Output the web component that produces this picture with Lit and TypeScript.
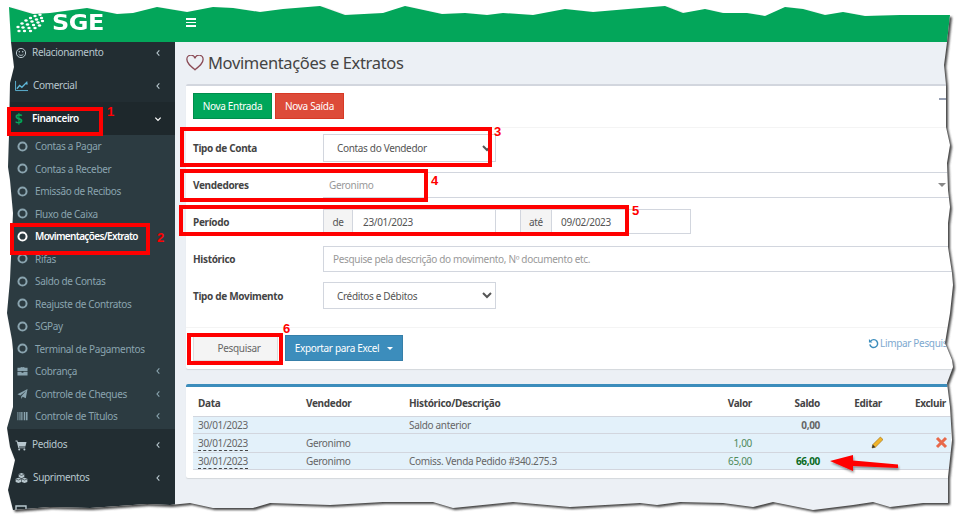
import { LitElement, html, css, svg } from "lit";
import { customElement } from "lit/decorators.js";

const edge: [number, number][] = [
  [9,7],[33,14],[50,13],[87,8],[117,14],[133,13],[157,7],[187,12],[213,7],[233,8],[260,12],[283,9],[320,6],[345,15],[383,13],[405,6],[442,14],[465,13],[487,15],[503,13],[533,15],[565,9],[593,12],[640,8],[665,6],[683,13],[705,9],[723,13],[747,13],[765,16],[785,7],[803,9],[825,15],[843,12],[865,16],[900,15],[950,15],
  [947,42],[944,65],[946,85],[946,127],[950,145],[947,163],[948,190],[950,207],[948,223],[948,247],[952,273],[953,285],[950,313],[945,343],[952,360],[953,367],[947,383],[950,407],[952,440],[948,477],[948,503],
  [923,503],[890,507],[873,502],[853,505],[813,510],[773,502],[753,507],[723,503],[680,502],[657,505],[640,503],[570,507],[513,502],[453,508],[433,502],[383,502],[330,505],[270,503],[253,508],[213,508],[190,503],[170,505],[147,504],[90,508],[50,507],[25,509],[13,510],
  [8,490],[15,460],[10,447],[7,428],[13,407],[13,350],[12,340],[7,313],[10,280],[13,213],[10,180],[8,167],[9,135],[10,83],[14,67],[11,42],
];
const inner = "M" + edge.map((p) => p.join(",")).join("L") + "Z";
const outer = "M0,0H963V520H0Z";

const chevL = html`<svg class="chev" viewBox="0 0 8 12"><path d="M6 2L2.5 6L6 10" fill="none" stroke="currentColor" stroke-width="1.7"/></svg>`;
const chevD = html`<svg class="chev" viewBox="0 0 12 8"><path d="M2 2L6 6L10 2" fill="none" stroke="currentColor" stroke-width="1.9"/></svg>`;
const ring = html`<svg class="ring" viewBox="0 0 10 10"><circle cx="5" cy="5" r="3.7" fill="none" stroke="currentColor" stroke-width="1.8"/></svg>`;

const icons = {
  smile: html`<svg class="ico" viewBox="0 0 12 12"><circle cx="6" cy="6" r="4.6" fill="none" stroke="currentColor" stroke-width="1"/><circle cx="4.3" cy="4.8" r=".8" fill="currentColor"/><circle cx="7.7" cy="4.8" r=".8" fill="currentColor"/><path d="M3.6 7.2C4.6 8.8 7.4 8.8 8.4 7.2" fill="none" stroke="currentColor" stroke-width=".9"/></svg>`,
  chart: html`<svg class="ico wide" viewBox="0 0 14 11"><path d="M.6 0V10.4H14" fill="none" stroke="#5fb7d8" stroke-width="1"/><path d="M2 8.4L5 5L7.4 6.8L12.6 1.6L13 4" fill="none" stroke="#5fb7d8" stroke-width="1.5"/></svg>`,
  cash: html`<span class="dollar">$</span>`,
  case: html`<svg class="ico sub" viewBox="0 0 12 11"><path d="M4 2V1H8V2H11.5V5.6H.5V2ZM5 2H7V1.8H5ZM.5 6.4H5V7.4H7V6.4H11.5V10.5H.5Z" fill="currentColor"/></svg>`,
  plane: html`<svg class="ico sub" viewBox="0 0 12 12"><path d="M11.5 .5L9.6 10.6L6.2 9L4.6 11.4V8.4L10 2.4L3.6 7.6L.5 6.2Z" fill="currentColor"/></svg>`,
  bars: html`<svg class="ico sub" viewBox="0 0 12 10"><path d="M.5 .5H1.5V9.5H.5ZM2.4 .5H3V9.5H2.4ZM3.8 .5H5.2V9.5H3.8ZM6 .5H6.6V9.5H6ZM7.4 .5H8.8V9.5H7.4ZM9.6 .5H11.5V9.5H9.6Z" fill="currentColor"/></svg>`,
  cart: html`<svg class="ico" viewBox="0 0 12 12"><path d="M.5 1.5H2.4L2.8 3H11.5L10.4 7.4H4L4.2 8.4H10.2V9.3H3.4L1.7 2.4H.5Z" fill="currentColor"/><circle cx="4.2" cy="10.4" r="1" fill="currentColor"/><circle cx="9.4" cy="10.4" r="1" fill="currentColor"/></svg>`,
  cubes: html`<svg class="ico wide" viewBox="0 0 14 12"><path d="M7 .5L10 1.8V5L7 6.3L4 5V1.8Z M3.7 5.6L6.7 6.9V10.2L3.7 11.5L.7 10.2V6.9Z M10.3 5.6L13.3 6.9V10.2L10.3 11.5L7.3 10.2V6.9Z" fill="currentColor"/><path d="M4 2L7 3.2L10 2M.8 7L3.7 8.2L6.6 7M7.4 7L10.3 8.2L13.2 7" fill="none" stroke="#222d32" stroke-width=".7"/></svg>`,
  screen: html`<svg class="ico" viewBox="0 0 12 12"><path d="M1 1H11V8H1Z" fill="none" stroke="currentColor" stroke-width="1.4"/></svg>`,
};

const dots = [[3,14],[7,10.5],[11,7.5],[15.5,5],[20,3],[25,1.8],[4,18],[8,14.5],[12.5,11.5],[17,8.5],[21.5,6.5],[26.5,5],[9.5,18],[14,15],[18.5,12],[23,9.5],[27.5,8],[15.5,18],[20,15],[24.5,12.5]];

@customElement("app-root")
export class AppRoot extends LitElement {
  static styles = css`
    :host { display: block; width: 963px; height: 520px; position: relative; overflow: hidden; background: #fff; font-family: "Noto Sans", sans-serif; font-size: 10px; letter-spacing: -.33px; color: #555; }
    * { box-sizing: border-box; }
    .top { height: 42px; background: #03a65a; display: flex; align-items: center; }
    .brand { width: 175px; display: flex; align-items: center; padding: 4px 0 0 15px; gap: 7px; color: #fff; }
    .globe { width: 30px; height: 20px; }
    .sge { font: bold 21px/1 "DejaVu Sans", sans-serif; transform: scaleX(1.14); transform-origin: left; letter-spacing: -.4px; }
    .burger { display: flex; flex-direction: column; gap: 1.5px; width: 10px; margin: 0 0 0 11px; padding-top: 3px; }
    .burger i { display: block; height: 1.7px; background: #fff; }
    .body { display: grid; grid-template-columns: 175px 1fr; height: 478px; }
    .side { background: #222d32; color: #b8c7ce; overflow: hidden; }
    .list { margin-top: -6px; }
    .item { height: 33px; display: flex; align-items: center; padding-left: 15px; }
    .item .lab { margin-left: 5px; flex: 1; padding-bottom: 2px; }
    .item.open { background: #1e282c; color: #fff; font-weight: 600; letter-spacing: -.4px; }
    .ico { width: 12px; height: 12px; flex: none; color: #b8c7ce; }
    .ico.wide { width: 13px; }
    .ico.sub { color: #8aa4af; }
    .dollar { width: 12px; color: #03a65a; font-size: 14px; font-weight: 600; line-height: 1; }
    .chev { width: 8px; height: 8px; margin-right: 13px; flex: none; }
    .tree { background: #2c3b41; color: #8aa4af; padding: 0 0 1px; }
    .sub-item { height: 22.5px; display: flex; align-items: center; padding-left: 17px; }
    .sub-item .lab { margin-left: 7px; flex: 1; padding-bottom: .5px; }
    .sub-item.on { color: #fff; font-weight: 600; letter-spacing: -.66px; }
    .ring { width: 11px; height: 11px; flex: none; }
    .sub-item .ico { width: 11px; }
    .main { background: #ecf0f5; padding-left: 11px; }
    .title { height: 42px; display: flex; align-items: center; gap: 4px; font-size: 16.5px; letter-spacing: -.35px; color: #444; }
    .title span { padding-bottom: 1px; }
    .heart { width: 18px; height: 16px; }
    .panel { background: #fff; border-top: 2px solid #d2d6de; box-shadow: 0 1px 1px rgba(0,0,0,.1); height: 285px; border-radius: 2px; }
    .panel-head { height: 42px; border-bottom: 1px solid #f4f4f4; padding: 7px 0 0 7px; display: flex; gap: 3px; position: relative; }
    .btn { height: 26px; display: flex; align-items: center; justify-content: center; color: #fff; border: 1px solid; white-space: nowrap; }
    .green { background: #00a65a; border-color: #008d4c; width: 79px; }
    .red { background: #dd4b39; border-color: #d73925; width: 69px; }
    .minus { position: absolute; right: 16px; top: 12px; width: 8px; height: 1.5px; background: #97a0b3; }
    .form { padding: 6px 0 0 7px; height: 200px; border-bottom: 1px solid #f4f4f4; }
    .row { display: grid; grid-template-columns: 130px 1fr; align-items: center; }
    .row label { font-weight: 700; color: #444; }
    .r1 { height: 28px; }
    .r2 { height: 26px; margin-top: 10px; }
    .r3 { height: 25px; margin-top: 11px; }
    .r4 { height: 26px; margin-top: 12px; }
    .r5 { height: 27px; margin-top: 10px; }
    select, input { font: inherit; letter-spacing: inherit; color: #555; background: #fff; border: 1px solid #d2d6de; border-radius: 0; outline: none; height: 100%; }
    select { width: 173px; padding-left: 9px; }
    input::placeholder { color: #999; }
    .s2 { height: 100%; border-top: 1px solid #d2d6de; border-bottom: 1px solid #d2d6de; display: flex; align-items: center; padding-left: 6px; color: #999; position: relative; }
    .s2 b { position: absolute; left: 615px; top: 10px; border: 4px solid transparent; border-top-color: #888; border-bottom: 0; }
    .dates { display: flex; height: 100%; }
    .addon { background: #f4f4f4; border: 1px solid #d2d6de; display: flex; align-items: center; justify-content: center; }
    .a-de { width: 30px; }
    .a-ate { width: 32px; }
    .d1 { width: 143px; border-left: 0; padding-left: 10px; }
    .d2 { width: 139px; border-left: 0; padding-left: 9px; }
    .gap { width: 24px; border-top: 1px solid #d2d6de; border-bottom: 1px solid #d2d6de; }
    .wide-input { width: 100%; padding-left: 9px; }
    .foot { display: flex; gap: 7px; padding: 7px 0 0 7px; position: relative; }
    .btn2 { height: 26px; display: flex; align-items: center; justify-content: center; border: 1px solid; }
    .ps { width: 85px; padding-left: 7px; background: #f4f4f4; border-color: #ddd; color: #666; }
    .ex { width: 118px; background: #3c8dbc; border-color: #367fa9; color: #fff; gap: 8px; }
    .ex i { border: 3px solid transparent; border-top-color: #fff; border-bottom: 0; }
    .clear { position: absolute; left: 682px; top: 8px; height: 14px; display: flex; gap: 1px; align-items: center; color: #7da9cf; white-space: nowrap; }
    .clear svg { width: 11px; height: 11px; color: #3c8dbc; }
    .ptable { margin-top: 15px; background: #fff; border-top: 3px solid #3c8dbc; height: 94px; padding: 0 12px 0 7px; box-shadow: 0 1px 1px rgba(0,0,0,.1); border-radius: 2px; }
    table { width: 100%; border-collapse: collapse; table-layout: fixed; }
    th { height: 29px; padding: 3px 5px 0; text-align: left; font-weight: 700; color: #444; border-bottom: 1px solid #d2d6de; }
    td { padding: 0 5px; background: #e3f1fa; border-bottom: 1px solid #d2d6de; color: #666; white-space: nowrap; }
    tr.h17 td { height: 17px; }
    tr.h19 td { height: 19px; }
    .r { text-align: right; }
    .dash { border-bottom: 1px dashed #444; }
    .pos { color: #4f8a5b; }
    .bold { font-weight: 700; }
    .up { color: #0b6b1f; }
    .tool { width: 13px; height: 13px; display: block; margin-left: auto; margin-right: -2px; }
    .frame { position: absolute; inset: 0; width: 963px; height: 520px; pointer-events: none; }
    .box { position: absolute; border: 4px solid #f00; pointer-events: none; }
    .b1 { left: 7px; top: 107px; width: 96px; height: 29px; }
    .b2 { left: 10px; top: 223px; width: 140px; height: 32px; }
    .b3 { left: 180px; top: 127px; width: 312px; height: 40px; }
    .b4 { left: 180px; top: 169px; width: 248px; height: 33px; }
    .b5 { left: 179px; top: 205px; width: 450px; height: 31px; }
    .b6 { left: 187px; top: 333px; width: 96px; height: 32px; }
    .n { position: absolute; color: #f00; font: bold 13px/1 "Liberation Sans", sans-serif; letter-spacing: 0; pointer-events: none; }
    .n1 { left: 107px; top: 105px; }
    .n2 { left: 157px; top: 231px; }
    .n3 { left: 494px; top: 125px; }
    .n4 { left: 431px; top: 174px; }
    .n5 { left: 632px; top: 204px; }
    .n6 { left: 283px; top: 322px; }
  `;

  render() {
    return html`
      <div class="top">
        <div class="brand">
          <svg class="globe" viewBox="0 0 30 20"><g fill="#fff">
            ${dots.map(([x,y]) => svg`<ellipse cx=${x} cy=${y} rx="1.7" ry="1.3"/>`)}
          </g></svg>
          <span class="sge">SGE</span>
        </div>
        <div class="burger"><i></i><i></i><i></i></div>
      </div>
      <div class="body">
        <aside class="side"><div class="list">
          <div class="item">${icons.smile}<span class="lab">Relacionamento</span>${chevL}</div>
          <div class="item">${icons.chart}<span class="lab">Comercial</span>${chevL}</div>
          <div class="item open">${icons.cash}<span class="lab">Financeiro</span>${chevD}</div>
          <div class="tree">
            ${["Contas a Pagar","Contas a Receber","Emissão de Recibos","Fluxo de Caixa"].map((t) => html`<div class="sub-item">${ring}<span class="lab">${t}</span></div>`)}
            <div class="sub-item on">${ring}<span class="lab">Movimentações/Extrato</span></div>
            ${["Rifas","Saldo de Contas","Reajuste de Contratos","SGPay","Terminal de Pagamentos"].map((t) => html`<div class="sub-item">${ring}<span class="lab">${t}</span></div>`)}
            <div class="sub-item">${icons.case}<span class="lab">Cobrança</span>${chevL}</div>
            <div class="sub-item">${icons.plane}<span class="lab">Controle de Cheques</span>${chevL}</div>
            <div class="sub-item">${icons.bars}<span class="lab">Controle de Títulos</span>${chevL}</div>
          </div>
          <div class="item">${icons.cart}<span class="lab">Pedidos</span>${chevL}</div>
          <div class="item">${icons.cubes}<span class="lab">Suprimentos</span>${chevL}</div>
          <div class="item">${icons.screen}<span class="lab"></span></div>
        </div></aside>
        <main class="main">
          <div class="title">
            <svg class="heart" viewBox="0 0 18 16"><path d="M9 14.8C4 10.6 1 8.2 1 5A3.9 3.9 0 0 1 9 3.4A3.9 3.9 0 0 1 17 5C17 8.2 14 10.6 9 14.8Z" fill="none" stroke="#8a4a55" stroke-width="1.3"/></svg>
            <span>Movimentações e Extratos</span>
          </div>
          <section class="panel">
            <div class="panel-head">
              <div class="btn green">Nova Entrada</div>
              <div class="btn red">Nova Saída</div>
              <i class="minus"></i>
            </div>
            <div class="form">
              <div class="row r1"><label>Tipo de Conta</label><select><option>Contas do Vendedor</option></select></div>
              <div class="row r2"><label>Vendedores</label><div class="s2">Geronimo<b></b></div></div>
              <div class="row r3"><label>Período</label>
                <div class="dates">
                  <div class="addon a-de">de</div><input class="d1" value="23/01/2023" />
                  <div class="gap"></div>
                  <div class="addon a-ate">até</div><input class="d2" value="09/02/2023" />
                </div>
              </div>
              <div class="row r4"><label>Histórico</label><input class="wide-input" placeholder="Pesquise pela descrição do movimento, Nº documento etc." /></div>
              <div class="row r5"><label>Tipo de Movimento</label><select><option>Créditos e Débitos</option></select></div>
            </div>
            <div class="foot">
              <div class="btn2 ps">Pesquisar</div>
              <div class="btn2 ex">Exportar para Excel <i></i></div>
              <div class="clear"><svg viewBox="0 0 12 12"><path d="M3 3.2A4.3 4.3 0 1 1 2 7" fill="none" stroke="currentColor" stroke-width="1.6"/><path d="M1 1.2V5H4.8Z" fill="currentColor"/></svg>Limpar Pesquisa</div>
            </div>
          </section>
          <section class="ptable">
            <table>
              <colgroup><col width="108"/><col width="103"/><col width="283"/><col width="70"/><col width="68"/><col width="62"/><col width="64"/></colgroup>
              <thead><tr><th>Data</th><th>Vendedor</th><th>Histórico/Descrição</th><th class="r">Valor</th><th class="r">Saldo</th><th class="r">Editar</th><th class="r">Excluir</th></tr></thead>
              <tbody>
                <tr class="h17"><td>30/01/2023</td><td></td><td>Saldo anterior</td><td></td><td class="r bold">0,00</td><td></td><td></td></tr>
                <tr class="h19"><td><span class="dash">30/01/2023</span></td><td>Geronimo</td><td></td><td class="r pos">1,00</td><td></td>
                  <td><svg class="tool" viewBox="0 0 13 13"><path d="M1 12L1.8 8.6L9.4 1L12 3.6L4.4 11.2Z" fill="#f0b429" stroke="#9a6a10" stroke-width=".6"/><path d="M1 12L1.8 8.6L4.4 11.2Z" fill="#333"/></svg></td>
                  <td><svg class="tool" viewBox="0 0 13 13"><path d="M2 2L11 11M11 2L2 11" stroke="#e8694a" stroke-width="3"/></svg></td></tr>
                <tr class="h17"><td><span class="dash">30/01/2023</span></td><td>Geronimo</td><td>Comiss. Venda Pedido #340.275.3</td><td class="r pos">65,00</td><td class="r bold up">66,00</td><td></td><td></td></tr>
              </tbody>
            </table>
          </section>
        </main>
      </div>

      <svg class="frame" viewBox="0 0 963 520">
        <defs>
          <clipPath id="out"><path clip-rule="evenodd" d="${outer + inner}"/></clipPath>
          <filter id="soft" x="-5%" y="-5%" width="110%" height="110%"><feGaussianBlur stdDeviation="1.3"/></filter>
          <filter id="ash" x="-20%" y="-50%" width="140%" height="200%"><feDropShadow dx="1" dy="2" stdDeviation="1.2" flood-color="#000" flood-opacity=".4"/></filter>
        </defs>
        <path d="${outer + inner}" fill="#fff" fill-rule="evenodd"/>
        <g clip-path="url(#out)"><path d="${inner}" fill="#444" filter="url(#soft)" transform="translate(2,2)"/></g>
        <path d="M830 461L853 455L853 460.5L898 464.5L898 468L853 466L853 471Z" fill="#f00" filter="url(#ash)"/>
      </svg>

      <div class="box b1"></div><div class="box b2"></div><div class="box b3"></div>
      <div class="box b4"></div><div class="box b5"></div><div class="box b6"></div>
      <span class="n n1">1</span><span class="n n2">2</span><span class="n n3">3</span>
      <span class="n n4">4</span><span class="n n5">5</span><span class="n n6">6</span>
    `;
  }
}
